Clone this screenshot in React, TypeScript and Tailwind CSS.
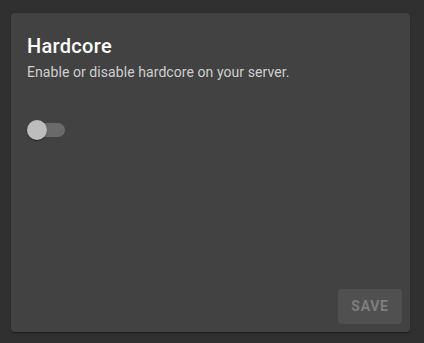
export default function App() {
  return (
    <div className="w-[424px] h-[343px] bg-[#303030] pt-[13px] pl-[11px] font-['Roboto',_'Liberation_Sans',_sans-serif]">
      <div className="w-[399px] h-[319px] bg-[#424242] rounded-[4px] shadow-[0_2px_1px_-1px_rgba(0,0,0,0.2),0_1px_1px_0_rgba(0,0,0,0.14),0_1px_3px_0_rgba(0,0,0,0.12)] flex flex-col">
        <div className="p-4 flex-1">
          <h2 className="text-[20px] leading-8 font-medium tracking-[0.015em] text-white mt-[1px]">Hardcore</h2>
          <p className="text-[14px] leading-5 tracking-[0.005em] text-[#cfcfcf]">Enable or disable hardcore on your server.</p>
          <div className="mt-[38px] relative w-[40px] h-[20px]">
            <div className="absolute left-[10px] top-[3px] w-[28px] h-[14px] rounded-full bg-[#6a6a6a]" />
            <div className="absolute left-0 top-0 w-[20px] h-[20px] rounded-full bg-[#bdbdbd] shadow-[0_2px_1px_-1px_rgba(0,0,0,0.2),0_1px_1px_0_rgba(0,0,0,0.14),0_1px_3px_0_rgba(0,0,0,0.12)]" />
          </div>
        </div>
        <div className="flex justify-end p-2">
          <button className="w-[64px] h-[35px] rounded-[4px] bg-[#505050] text-[#7e7e7e] text-[14px] font-bold tracking-[0.05em]">SAVE</button>
        </div>
      </div>
    </div>
  );
}
